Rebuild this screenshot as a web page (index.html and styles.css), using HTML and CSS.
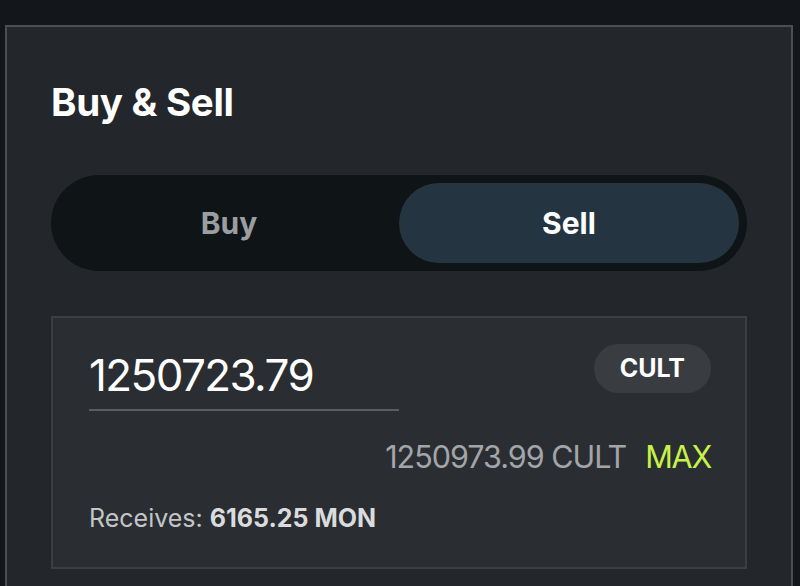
FILE: index.html
```html
<!DOCTYPE html>
<html>
<head>
<meta charset="utf-8">
<link rel="stylesheet" href="styles.css">
</head>
<body>
<div class="panel">
  <h1 class="title">Buy &amp; Sell</h1>
  <div class="toggle">
    <button class="tab">Buy</button>
    <button class="tab active">Sell</button>
  </div>
  <div class="card">
    <div class="row-top">
      <div class="amount">1250723.79</div>
      <div class="token">CULT</div>
    </div>
    <div class="row-balance">
      <span class="balance">1250973.99 CULT</span>
      <span class="max">MAX</span>
    </div>
    <div class="receives">Receives: <b>6165.25 MON</b></div>
  </div>
</div>
</body>
</html>
```
FILE: styles.css
```css
html, body {
  margin: 0;
  padding: 0;
  background: #13171b;
  font-family: Inter, "Noto Sans", sans-serif;
  overflow: hidden;
}
.panel {
  margin: 25px 0 0 5px;
  width: 788px;
  height: 620px;
  border: 2px solid #4a4f55;
  background: #23272c;
  padding: 0 44px 0 44px;
  box-sizing: border-box;
}
.title {
  margin: 0;
  padding-top: 52px;
  font-size: 38.5px;
  line-height: 46px;
  font-weight: 700;
  color: #ffffff;
  letter-spacing: -0.3px;
}
.toggle {
  margin-top: 50px;
  height: 96px;
  border-radius: 48px;
  background: #0f1417;
  padding: 8px;
  box-sizing: border-box;
  display: flex;
}
.tab {
  flex: 1;
  border: none;
  background: transparent;
  border-radius: 40px;
  font-family: inherit;
  font-size: 30px;
  font-weight: 700;
  color: #9b9ea1;
  padding: 0;
}
.tab.active {
  background: #253441;
  color: #ffffff;
}
.card {
  margin-top: 45px;
  height: 253px;
  border: 2px solid #3b3f44;
  background: #2a2e33;
  box-sizing: border-box;
  padding: 26px 34px 0 36px;
}
.row-top {
  display: flex;
  justify-content: space-between;
  align-items: flex-start;
}
.amount {
  width: 310px;
  margin-top: 3px;
  font-size: 44px;
  line-height: 56px;
  color: #ffffff;
  letter-spacing: -1.6px;
  border-bottom: 2px solid #5a5e63;
  padding-bottom: 6px;
}
.token {
  height: 49px;
  padding: 0 26px;
  border-radius: 25px;
  background: #393c41;
  color: #ffffff;
  font-weight: 700;
  font-size: 25px;
  line-height: 49px;
}
.row-balance {
  display: flex;
  justify-content: flex-end;
  align-items: baseline;
  gap: 19px;
  margin-top: 26px;
  font-size: 30.5px;
  line-height: 40px;
}
.balance {
  color: #a3a5a8;
  letter-spacing: -1px;
}
.max {
  color: #c6f24a;
  letter-spacing: -1.2px;
}
.receives {
  margin-top: 26px;
  font-size: 25px;
  line-height: 30px;
  color: #c3c5c7;
}
.receives b {
  color: #dadbdc;
  font-weight: 700;
}
```
